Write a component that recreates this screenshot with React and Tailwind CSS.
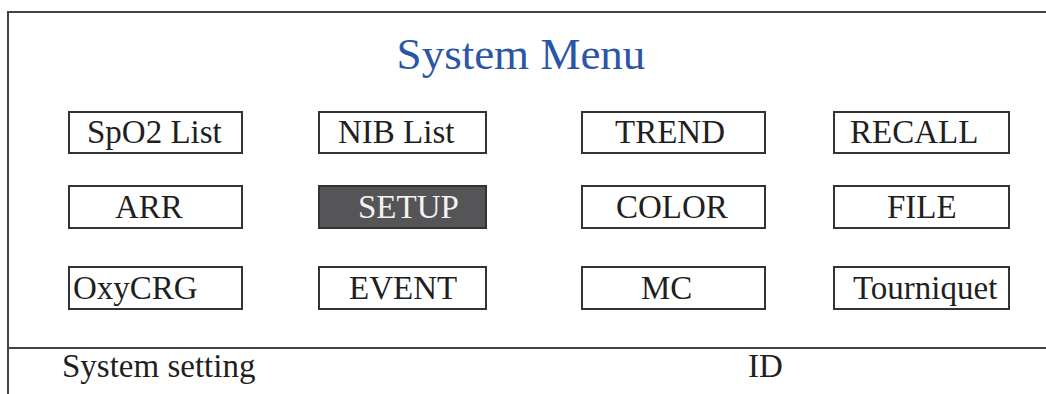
import React from "react";

const rows = [
  {
    cls: "h-[43px]",
    items: [
      { label: "SpO2 List", pl: "pl-[17px]" },
      { label: "NIB List", pl: "pl-[18px]" },
      { label: "TREND", pl: "pl-[32px]" },
      { label: "RECALL", pl: "pl-[15px]" },
    ],
  },
  {
    cls: "h-[44px] mt-[31px]",
    items: [
      { label: "ARR", pl: "pl-[45px]" },
      { label: "SETUP", pl: "pl-[38px]", active: true },
      { label: "COLOR", pl: "pl-[33px]" },
      { label: "FILE", pl: "pl-[52px]" },
    ],
  },
  {
    cls: "h-[44px] mt-[37px]",
    items: [
      { label: "OxyCRG", pl: "pl-[3px]" },
      { label: "EVENT", pl: "pl-[29px]" },
      { label: "MC", pl: "pl-[58px]" },
      { label: "Tourniquet", pl: "pl-[18px]" },
    ],
  },
];

const cols = [
  "ml-[59px] w-[175px]",
  "ml-[75px] w-[169px]",
  "ml-[94px] w-[185px]",
  "ml-[67px] w-[177px]",
];

export default function App() {
  return (
    <div
      className="w-[1046px] h-[394px] bg-white overflow-hidden pt-[11px] pl-[7px]"
      style={{ fontFamily: '"Liberation Serif", "Times New Roman", serif' }}
    >
      <div className="h-[383px] border-t-2 border-l-2 border-[#444] flex flex-col">
        <div className="h-[334px] flex flex-col">
          <div className="pt-[19px] pr-[13px] text-center text-[45px] leading-none text-[#2b55a8]">
            System Menu
          </div>
          <div className="mt-[34px] flex flex-col">
            {rows.map((row, ri) => (
              <div key={ri} className={`flex ${row.cls}`}>
                {row.items.map((it, ci) => (
                  <div
                    key={it.label}
                    className={`${cols[ci]} h-full border-2 flex items-center ${it.pl} text-[33px] leading-none ${
                      it.active
                        ? "bg-[#555557] border-[#333] text-[#f2f2f2]"
                        : "bg-white border-[#333] text-[#1f1f1f]"
                    }`}
                  >
                    {it.label}
                  </div>
                ))}
              </div>
            ))}
          </div>
        </div>
        <div className="border-t-2 border-[#444] flex text-[33px] leading-none text-[#1f1f1f] pt-[1px]">
          <div className="pl-[53px] w-[739px]">System setting</div>
          <div>ID</div>
        </div>
      </div>
    </div>
  );
}
